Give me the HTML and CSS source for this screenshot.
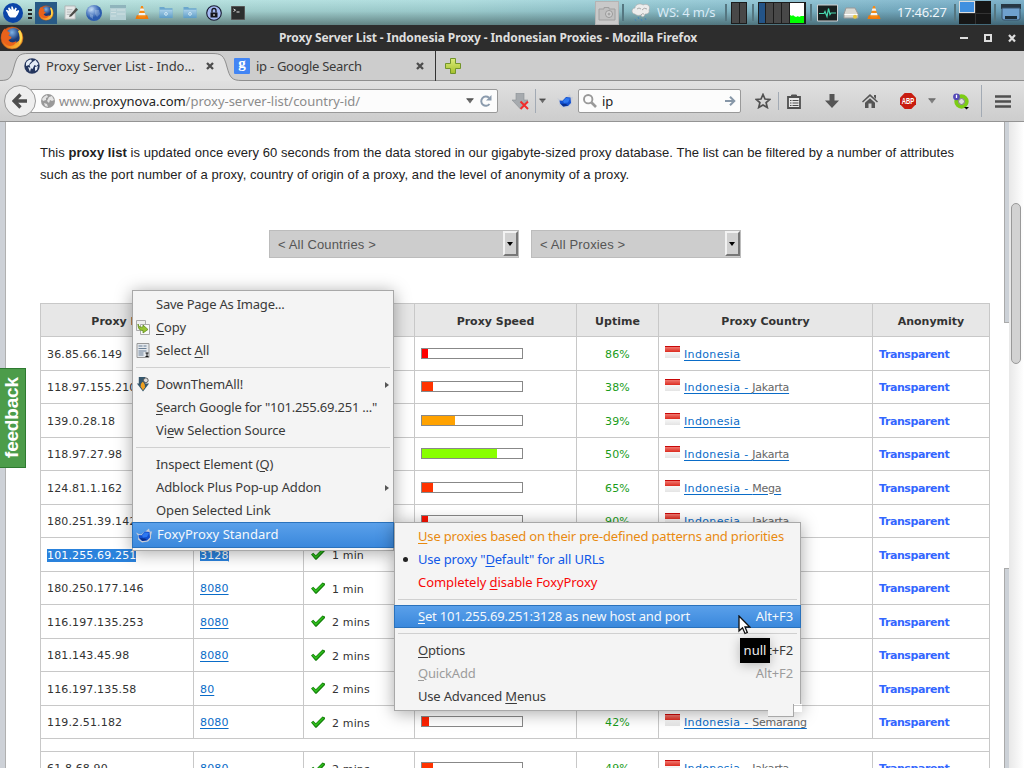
FILE: index.html
```html
<!DOCTYPE html>
<html lang="en">
<head>
    <meta charset="UTF-8">
    <title>Proxy Server List - Indonesia Proxy - Indonesian Proxies</title>
    <link rel="stylesheet" href="styles.css">
</head>
<body>
    <!-- shared icons -->
    <svg class="defs" width="0" height="0">
        <defs>
            <linearGradient id="g-fox" x1="0" y1="0" x2="1" y2="1"><stop offset="0" stop-color="#d8461c"/><stop offset=".55" stop-color="#f08020"/><stop offset="1" stop-color="#ffd840"/></linearGradient>
            <radialGradient id="g-globe" cx=".4" cy=".3"><stop offset="0" stop-color="#7fb4e8"/><stop offset="1" stop-color="#1a3a78"/></radialGradient>
            <radialGradient id="g-world" cx=".35" cy=".3"><stop offset="0" stop-color="#b8d4f4"/><stop offset="1" stop-color="#2c5cae"/></radialGradient>
            <linearGradient id="g-plus" x1="0" y1="0" x2="0" y2="1"><stop offset="0" stop-color="#dcec7a"/><stop offset="1" stop-color="#a4c02c"/></linearGradient>
            <linearGradient id="g-folder" x1="0" y1="0" x2="0" y2="1"><stop offset="0" stop-color="#a9d0ea"/><stop offset="1" stop-color="#5d9cc6"/></linearGradient>
        </defs>
        <symbol id="firefox" viewBox="0 0 24 24">
            <circle cx="12" cy="12" r="11" fill="url(#g-fox)" stroke="#b5541a" stroke-width=".6"/>
            <circle cx="13.5" cy="9.5" r="7.6" fill="url(#g-globe)"/>
            <path d="M20 4c3 4 3 11-1 14 1-4 1-9-1-13z" fill="#ffd84a"/>
            <path d="M1.500 9C2 6 3 4 5 2.500L6 5c2 0 3 1 4 2L8.500 9.500l3 1.500c0 2-2 2-3 3 1 3 5 3 8 1-1 5-8 7-12 2C2 15 1 12 1.500 9z" fill="#e8621c"/>
        </symbol>
        <symbol id="vlc" viewBox="0 0 16 16">
            <path d="M2 11h12l1.500 4.500H.5z" fill="#ee7a0a"/>
            <path d="M7 .5h2L12.500 13q-4.500 2-9 0z" fill="#f58a14"/>
            <path d="M6.200 3.500h3.600l.8 2.500H5.400zM4.700 8.500h6.600l.8 2.700H3.900z" fill="#f4f4f4"/>
        </symbol>
        <symbol id="folder" viewBox="0 0 16 14">
            <path d="M1 3V1h5l1 1.500h8V13H1z" fill="#6ba7cd"/><path d="M1 4h14v9H1z" fill="url(#g-folder)"/>
            <circle cx="8" cy="8.500" r="1.500" fill="none" stroke="#dff0fa" stroke-width=".9"/>
        </symbol>
        <symbol id="fox" viewBox="0 0 16 14">
            <path d="M0 4l3 1.500L5 6l5-3.500L13 0l.8 3L16 3 15 7v3l-3 3-6 1-4-3 .5-3z" fill="#c8ccd6"/>
            <path d="M2.500 6.500l3 .3L9 3l4.500.5L14 9l-3 3-5 .5-3-3z" fill="#1250d0"/>
            <path d="M6 7l3-3 4 .5-2 4-4 .5z" fill="#2e78f0"/>
            <path d="M3.500 9.500l3 3 4.500-1-2-1.500z" fill="#0a2f8c"/>
        </symbol>
        <symbol id="check" viewBox="0 0 14 12">
            <path d="M0 6.500l2.200-1.700 2.600 2.500L11.500.5 14 1.600v1.500L5.500 11.800H4.400z" fill="#16800c"/>
            <path d="M1 6.500l1.200-.8 2.600 2.600 6.900-6.800 1.300.8-8.100 8.200z" fill="#2fbe1c"/>
        </symbol>
        <symbol id="close" viewBox="0 0 8 8"><path d="M1 1l6 6M7 1L1 7" stroke="#4c4c4c" stroke-width="2.300"/></symbol>
        <symbol id="down" viewBox="0 0 8 6"><path d="M.3.500h7.400L4 5.600z" fill="#6a6a6a"/><path d="M.3.500h7.400L7 1.500H1z" fill="#444"/></symbol>
    </svg>

    <div class="taskbar">
        <svg class="tb-start" viewBox="0 0 20 20"><circle cx="10" cy="10" r="10" fill="#0a45a8"/><path d="M4.500 10L2.800 7.500l1-.8L6 8 5 5l1.300-.6L8.500 7l-.3-3.500h1.400L11 7l1.600-2.500 1.200.7-1 3 2.700-1.200.7 1c-1 3-2 4.500-3.700 6.500H7.500C6 13.500 5 12 4.500 10z" fill="#fff"/></svg>
        <div class="grip"><i></i><i></i><i></i></div>
        <div class="task-active"><svg width="16" height="16"><use href="#firefox"/></svg></div>
        <svg class="tb-note" viewBox="0 0 16 16"><path d="M1 1h11v14H1z" fill="#e6e8e8" stroke="#aeb4b4"/><path d="M3 5h6M3 7.500h5M3 10h4" stroke="#b2b6b8"/><path d="M6 11l7-8 2 2-7 7-2.500.8z" fill="#4c4c48"/></svg>
        <svg class="tb-world" viewBox="0 0 16 16"><circle cx="8" cy="8" r="8" fill="url(#g-world)"/><path d="M3 3q3-2 5 0l-1 2-3 2-2-1zM9 5l4 0 1 4-3 3-2-3zM4 9l3 1 0 4-3-2z" fill="#cfe4f6" opacity=".3"/></svg>
        <svg class="tb-window" viewBox="0 0 16 15"><path d="M0 0h16v15H0z" fill="#b5d0d5"/><path d="M0 0h16v3H0z" fill="#8fb4bc"/><path d="M1 5h5M7 5h8M1 7.500h5M7 9h8M1 11h5" stroke="#cfe0e2"/></svg>
        <svg class="tb-vlc"><use href="#vlc"/></svg>
        <svg class="tb-folder"><use href="#folder"/></svg>
        <svg class="tb-folder"><use href="#folder"/></svg>
        <svg class="tb-lock" viewBox="0 0 16 16"><circle cx="8" cy="8" r="7.300" fill="#a4b8f2" stroke="#161a30" stroke-width="1.100"/><path d="M4.500 7.500h7v5h-7z" fill="#15151c"/><path d="M6 7.500V5.500q0-2 2-2t2 2v2" fill="none" stroke="#15151c" stroke-width="1.300"/><path d="M8 9v2" stroke="#fff"/></svg>
        <svg class="tb-term" viewBox="0 0 14 14"><path d="M.5.500h13v13H.5z" fill="#2c2e2e" stroke="#555"/><path d="M2.500 3l2 1.200-2 1.300M5.500 6h3" fill="none" stroke="#e8e8e8"/></svg>

        <div class="tray">
            <div class="camera"><svg width="18" height="14" viewBox="0 0 18 14"><path d="M1 2h5V.5h5V2h6v11H1z" fill="#c0c0c0" stroke="#a0a0a0"/><circle cx="11" cy="7" r="3.500" fill="#d0d0d0" stroke="#999"/><circle cx="11" cy="7" r="1.500" fill="#a5a5a5"/></svg></div>
            <i class="tsep"></i>
            <svg class="cloud" viewBox="0 0 20 20"><path d="M4 11C0 11 0 5 4 5 4 1 10 0 12 2c4-2 8 1 6 5 1 4-3 4-4 4-1 4-4 3-4 1-3 1-5 0-6-1z" fill="#ececec" stroke="#aaa" stroke-width=".6"/><path d="M6 6q2-2 4 0M11 7q2-3 5-1M10 12q1-2 3-1" stroke="#aaa" fill="none"/><path d="M4 16l1 2M7 14l1 2M10 16l1 2M14 15l1 2" stroke="#4884b8"/></svg>
            <span class="weather">WS: 4 m/s</span>
            <i class="tsep"></i>
            <div class="meter two"><i></i><i></i></div>
            <i class="tsep"></i>
            <div class="meter cpu"><i class="busy"></i><i></i><i></i><i></i><svg width="14" height="20" viewBox="0 0 14 20"><path d="M0 0h14v20H0z" fill="#fff"/><path d="M0 20v-8l2 1 1-1 1 1 2 1 2-1 1 1 2-1 3 0v7z" fill="#0f0"/></svg></div>
            <i class="tsep"></i>
            <svg class="pulse" viewBox="0 0 21 17"><path d="M.5.500h20v16H.5z" fill="#182020" stroke="#d0d0d0"/><path d="M2 9h5l1-2 2 5 1.500-8 1.500 6 1-1.500h5" fill="none" stroke="#48d8b0" stroke-width="1.200"/></svg>
            <svg class="disk" viewBox="0 0 16 12"><path d="M3 1h9l3 6v4H1V7z" fill="#d9d9d2" stroke="#999"/><path d="M1.500 7.500h13" stroke="#fff"/><circle cx="12" cy="9.700" r="2" fill="#e8c83c"/></svg>
            <svg class="tray-vlc"><use href="#vlc"/></svg>
            <span class="clock">17:46:27</span>
            <i class="tsep"></i>
            <div class="pager"><i class="on"></i><i></i><i></i><i></i></div>
            <i class="tsep"></i>
            <svg class="desk" viewBox="0 0 20 17"><path d="M0 0h20v5H0z" fill="#273744"/><path d="M1 4h18v10q0 2-2 2H3q-2 0-2-2z" fill="#6fa0ce" stroke="#39536a"/><path d="M4 12h12v3H4z" fill="#1d2b36"/></svg>
        </div>
    </div>

    <div class="titlebar">
        <svg class="logo"><use href="#firefox"/></svg>
        <span class="title">Proxy Server List - Indonesia Proxy - Indonesian Proxies - Mozilla Firefox</span>
        <svg class="winbtns" width="56" height="10" viewBox="0 0 56 10"><path d="M0 5h8" stroke="#dedede" stroke-width="2"/><path d="M25 2h6v6h-6z" fill="none" stroke="#dedede" stroke-width="2"/><path d="M49 2l6 6.500M55 2l-6 6.500" stroke="#dedede" stroke-width="2.200"/></svg>
    </div>

    <div class="tabs">
        <svg class="tab-shape" width="435" height="30" viewBox="0 0 435 30">
            <path d="M0 29.500C10 29.500 11 27 14 16 17 4 20 2.500 28 2.500H212C221 2.500 224 4 227 16 230 27 232 29.500 242 29.500V30H0z" fill="#e2e2e2"/>
            <path d="M0 29.500C10 29.500 11 27 14 16 17 4 20 2.500 28 2.500H212C221 2.500 224 4 227 16 230 27 232 29.500 242 29.500H435" fill="none" stroke="#8e8e8e"/>
        </svg>
        <div class="tab first">
            <svg class="fav" viewBox="0 0 16 16"><circle cx="8" cy="8" r="7.700" fill="#24365e"/><path d="M2 5q1-3 5-3.500L8 3 6 5 5 7 2 8zM8.500 4l3-2 3 4-2 2-2-1-2 4-2-1-1-3zM4 9l3 1-1 4zM11 9l3-1-1 4-2 1z" fill="#e4ecf6"/></svg>
            <span class="label">Proxy Server List - Indo...</span>
            <svg class="x"><use href="#close"/></svg>
        </div>
        <div class="tab second">
            <span class="google">g</span>
            <span class="label tight">ip - Google Search</span>
            <svg class="x"><use href="#close"/></svg>
        </div>
        <svg class="newtab" viewBox="0 0 16 16"><path d="M5.500.500h5v5h5v5h-5v5h-5v-5h-5v-5h5z" fill="url(#g-plus)" stroke="#72942a"/></svg>
    </div>

    <div class="navbar">
        <div class="back"><svg width="16" height="16" viewBox="0 0 16 16"><path d="M15 8H3M8.500 1.500L2 8l6.500 6.500" fill="none" stroke="#4e4e4e" stroke-width="3.300"/></svg></div>
        <div class="urlbar">
            <svg class="site" viewBox="0 0 14 14"><circle cx="7" cy="7" r="7" fill="#999"/><path d="M1 5q2-3 5-4l1 2-2 1 0 2-3 1zM8 3l3-1 2 4-2 1-2-1-1 3-2-2zM3 9l3 1 1 3-3-1z" fill="#e4e4e4"/></svg>
            <span class="url">www.<b>proxynova.com</b>/proxy-server-list/country-id/</span>
            <svg class="drop"><use href="#down"/></svg>
            <svg class="reload" viewBox="0 0 12 12"><path d="M9.500 9A4.600 4.600 0 1 1 9 2.800" fill="none" stroke="#8b9bad" stroke-width="2"/><path d="M11.500 0v5.500H6z" fill="#8b9bad"/></svg>
        </div>
        <svg class="dta" viewBox="0 0 17 17"><path d="M4 0h8v7h4L8 15.500 0 7h4z" fill="#a6aaae" stroke="#8c9094" stroke-width=".6"/><path d="M8.500 8.500l7.500 7.500M16 8.500L8.500 16" stroke="#f22c2c" stroke-width="2"/></svg>
        <i class="nsep s1"></i>
        <svg class="drop d2"><use href="#down"/></svg>
        <svg class="foxy"><use href="#fox"/></svg>
        <div class="search">
            <svg class="mag" viewBox="0 0 14 14"><circle cx="5.200" cy="5.200" r="4.200" fill="none" stroke="#999" stroke-width="1.900"/><path d="M8.500 8.500l4.500 4.500" stroke="#999" stroke-width="2.600"/></svg>
            <span class="q">ip</span>
            <svg class="go" viewBox="0 0 11 10"><path d="M0 5h9M5 .7L9.300 5 5 9.300" fill="none" stroke="#8797a8" stroke-width="2"/></svg>
        </div>
        <div class="tools">
            <svg class="t-star" viewBox="0 0 16 16"><path d="M8 1.500l2 4.500 4.800.4-3.700 3.200 1.200 4.900L8 12l-4.300 2.500 1.200-4.900L1.200 6.400 6 6z" fill="none" stroke="#505050" stroke-width="1.700"/></svg>
            <i class="nsep s2"></i>
            <svg class="t-list" viewBox="0 0 14 15"><path d="M1 3h12v11H1z" fill="#e8e8e8" stroke="#505050" stroke-width="1.800"/><path d="M4.500 3V1h5v2z" fill="#505050" stroke="#505050"/><path d="M3 6.500h1.500M5.500 6.500h6M3 9h1.500M5.500 9h6M3 11.500h1.500M5.500 11.500h6" stroke="#505050" stroke-width="1.100"/></svg>
            <svg class="t-dl" viewBox="0 0 14 14"><path d="M4.500 0h5v6.500H14L7 14 0 6.500h4.500z" fill="#555"/></svg>
            <svg class="t-home" viewBox="0 0 16 14"><path d="M0 7.500L8 0l8 7.500-1 1L8 2.200l-7 6.300z" fill="#555"/><path d="M12 1h2v4l-2-2zM3 8.700l5-4.500 5 4.500V14H9.500V9.500h-3V14H3z" fill="#555"/></svg>
            <svg class="t-abp" viewBox="0 0 16 16"><path d="M4.700 0h6.600L16 4.700v6.600L11.300 16H4.700L0 11.300V4.700z" fill="#c81c10"/><text x="8" y="11" text-anchor="middle" class="abp-text" textLength="12.500" lengthAdjust="spacingAndGlyphs">ABP</text></svg>
            <svg class="drop d3"><use href="#down"/></svg>
            <svg class="t-ring" viewBox="0 0 16 17"><circle cx="8.500" cy="8.500" r="5.200" fill="none" stroke="#7ccc14" stroke-width="4"/><circle cx="8.500" cy="8.500" r="3" fill="#ddd" stroke="#777"/><circle cx="3.500" cy="3.800" r="3.400" fill="#5448b8"/><path d="M3.500 1.800v3.200" stroke="#fff" stroke-width="1.300"/><path d="M11 14h5l-2.500 2.500z" fill="#000"/></svg>
            <i class="nsep s3"></i>
            <svg class="t-menu" viewBox="0 0 16 13"><path d="M0 1.500h16M0 6.500h16M0 11.500h16" stroke="#505050" stroke-width="2.600"/></svg>
        </div>
    </div>

    <div class="viewport">
        <div class="edge"></div>
        <div class="page">
            <p class="intro">This <b>proxy list</b> is updated once every 60 seconds from the data stored in our gigabyte-sized proxy database. The list can be filtered by a number of attributes<br><span class="wider">such as the port number of a proxy, country of origin of a proxy, and the level of anonymity of a proxy.</span></p>
            <div class="filters">
                <div class="select wide"><span>&lt; All Countries &gt;</span><i></i></div>
                <div class="select"><span>&lt; All Proxies &gt;</span><i></i></div>
            </div>
            <table class="proxies">
                <colgroup><col class="c-ip"><col class="c-port"><col class="c-check"><col class="c-speed"><col class="c-up"><col class="c-country"><col class="c-anon"></colgroup>
                <thead>
                    <tr><th>Proxy IP</th><th>Proxy Port</th><th>Last Check</th><th>Proxy Speed</th><th>Uptime</th><th>Proxy Country</th><th>Anonymity</th></tr>
                </thead>
                <tbody id="rows"></tbody>
            </table>
        </div>
        <div class="gutter"><div class="gutter-gap"></div></div>
        <div class="scrollbar"><div class="thumb"></div></div>
        <div class="feedback">feedback</div>
    </div>

    <div class="menu main-menu">
        <div class="item"><span class="tight">Save Page As Image...</span></div>
        <div class="item"><svg class="mi" viewBox="0 0 14 15"><path d="M.5.500h9v10h-9z" fill="#eee" stroke="#aaa"/><path d="M4.500 4.500h9v10h-9z" fill="#fafafa" stroke="#aaa"/><path d="M2 4q1 4 5 3V5l5 4.500L7 13v-2.500Q2 11 2 4z" fill="#98c434" stroke="#5e8a1c" stroke-width=".8"/></svg><span><u>C</u>opy</span></div>
        <div class="item"><svg class="mi" viewBox="0 0 13 15"><path d="M.5.500h12v14H.5z" fill="#e4e8ec" stroke="#999"/><path d="M2 3h4M7 3h3M2 5.500h8M2 8h8M2 10h5M2 12h5" stroke="#6a7f96"/><path d="M9 10h3M9 13.500h3M10.500 10v3.500" stroke="#111"/></svg><span>Select <u>A</u>ll</span></div>
        <hr>
        <div class="item sub"><svg class="mi" viewBox="0 0 13 16"><path d="M2 0h7v7h4L6.500 15.500 0 7h2z" fill="#35566c"/><path d="M6 5q3 2 2.500 6l-2 3L4 10.500Q3.500 7 6 5z" fill="#f0a020"/><circle cx="9.500" cy="3.500" r="2.500" fill="#ddd" stroke="#555"/></svg><span>DownThemAll!</span></div>
        <div class="item"><span class="tight"><u>S</u>earch Google for "101.255.69.251 ..."</span></div>
        <div class="item"><span>Vi<u>e</u>w Selection Source</span></div>
        <hr>
        <div class="item"><span>Inspect Element (<u>Q</u>)</span></div>
        <div class="item sub"><span>Adblock Plus Pop-up Addon</span></div>
        <div class="item"><span>Open Selected Link</span></div>
        <div class="item active"><svg class="mi"><use href="#fox"/></svg><span>FoxyProxy Standard</span></div>
    </div>

    <div class="menu sub-menu">
        <div class="item orange"><span><u>U</u>se proxies based on their pre-defined patterns and priorities</span></div>
        <div class="item blue radio"><span>Use proxy "<u>D</u>efault" for all URLs</span></div>
        <div class="item red"><span>Completely <u>d</u>isable FoxyProxy</span></div>
        <hr>
        <div class="item active"><span><u>S</u>et 101.255.69.251:3128 as new host and port</span><kbd>Alt+F3</kbd></div>
        <hr>
        <div class="item"><span><u>O</u>ptions</span><kbd>Alt+F2</kbd></div>
        <div class="item off"><span><u>Q</u>uickAdd</span><kbd>Alt+F2</kbd></div>
        <div class="item"><span>Use Advanced <u>M</u>enus</span></div>
    </div>
    <div class="corner-gap"></div>
    <div class="corner"></div>

    <div class="tooltip">null</div>
    <svg class="cursor" viewBox="0 0 13 20"><path d="M1 1v15l3.500-3.200L7 18.500l2.300-1L7 12h4.800z" fill="#fff" stroke="#111" stroke-width="1.300"/></svg>

    <script>
        // ip, port, last check, speed %, bar colour, uptime, city
        const proxies = [
            ['36.85.66.149', '8080', '1 min', 6, 'red', '86%', ''],
            ['118.97.155.210', '8080', '1 min', 11, '#f30', '38%', 'Jakarta'],
            ['139.0.28.18', '8080', '1 min', 33, '#ffa200', '39%', ''],
            ['118.97.27.98', '8080', '1 min', 75, '#8f0', '50%', 'Jakarta'],
            ['124.81.1.162', '8080', '1 min', 11, '#f30', '65%', 'Mega'],
            ['180.251.39.142', '8080', '1 min', 6, '#f10', '90%', 'Jakarta'],
            ['101.255.69.251', '3128', '1 min', 8, '#f20', '', ''],
            ['180.250.177.146', '8080', '1 min', 8, '#f20', '', ''],
            ['116.197.135.253', '8080', '2 mins', 8, '#f20', '', ''],
            ['181.143.45.98', '8080', '2 mins', 8, '#f20', '', ''],
            ['116.197.135.58', '80', '2 mins', 8, '#f20', '', ''],
            ['119.2.51.182', '8080', '2 mins', 7, '#f20', '42%', 'Semarang'],
            null,
            ['61.8.68.90', '8080', '2 mins', 11, '#f30', '49%', 'Jakarta']
        ];

        document.getElementById('rows').innerHTML = proxies.map(p => {
            if (!p) return '<tr class="spacer"><td colspan="7"></td></tr>';
            const [ip, port, ago, speed, color, up, city] = p;
            const sel = port === '3128' ? ' class="selected"' : '';
            const country = up ? `<i class="flag"></i><a>Indonesia${city ? ` - <small>${city}</small>` : ''}</a>` : '';
            return `<tr>
                <td><span${sel}>${ip}</span></td>
                <td><a${sel}>${port}</a></td>
                <td class="ago"><svg class="ok"><use href="#check"/></svg>${ago}</td>
                <td><div class="bar"><div style="width:${speed}%;background:${color}"></div></div></td>
                <td class="up">${up}</td>
                <td class="country">${country}</td>
                <td class="anon">Transparent</td>
            </tr>`;
        }).join('');
    </script>
</body>
</html>
```

FILE: styles.css
```css
* {
    box-sizing: border-box;
}
body {
    margin: 0;
    width: 1024px;
    height: 768px;
    overflow: hidden;
    position: relative;
    display: flex;
    flex-direction: column;
    background: #fff;
    font-family: "Noto Sans", "Open Sans", sans-serif;
    font-size: 13px;
    color: #3a3a3a;
}
svg {
    display: block;
    flex: none;
}
.defs {
    position: absolute;
}

/* desktop panel */
.taskbar {
    height: 25px;
    flex: none;
    display: flex;
    align-items: center;
    padding-left: 3px;
    background: linear-gradient(rgba(255,255,255,.12), rgba(0,0,0,.08) 45%, rgba(0,10,10,.42)), linear-gradient(90deg, #b5e2dd, #a5d8da 45%, #86bfd0 75%, #6ea8c4);
}
.tb-start { width: 20px; height: 20px; }
.grip {
    display: flex;
    flex-direction: column;
    gap: 2px;
    margin: 2px 3px 0 5px;
}
.grip i {
    width: 4px;
    height: 2px;
    background: #222;
}
.task-active {
    width: 22px;
    height: 22px;
    padding: 3px;
    background: #285a86;
}
.tb-note { width: 15px; height: 15px; margin-left: 7px; }
.tb-world { width: 16px; height: 16px; margin-left: 7px; }
.tb-window { width: 16px; height: 15px; margin-left: 8px; }
.tb-vlc { width: 14px; height: 15px; margin-left: 9px; }
.tb-folder { width: 16px; height: 13px; margin-left: 8px; }
.tb-vlc + .tb-folder { margin-left: 9px; }
.tb-lock { width: 16px; height: 16px; margin-left: 8px; }
.tb-term { width: 14px; height: 14px; margin-left: 9px; }
.tray {
    margin-left: auto;
    width: 429px;
    height: 25px;
    display: flex;
    align-items: center;
}
.camera {
    width: 24px;
    height: 24px;
    background: #c9c9c9;
    border: 1px solid #b4b4b4;
    padding: 5px 2px;
}
.tsep {
    width: 2px;
    height: 17px;
    margin: 0 3px;
    background: #557680;
}
.cloud { width: 20px; height: 20px; margin-left: 4px; }
.weather {
    width: 61px;
    margin: 0 4px 0 6px;
    font-size: 13px;
    letter-spacing: -.2px;
    line-height: 22px;
    height: 24px;
    white-space: nowrap;
    color: #d8eaf6;
}
.clock {
    width: 52px;
    margin: 0 2px 0 16px;
    font-size: 13px;
    letter-spacing: -.25px;
    line-height: 22px;
    height: 24px;
    white-space: nowrap;
    color: #eef5fa;
}
.meter {
    height: 22px;
    flex: none;
    display: flex;
    gap: 1px;
    padding: 1px;
    background: #1c1c1c;
}
.meter i {
    width: 7px;
    background: #484848;
}
.meter.two { width: 16px; margin: 0 2px 0 1px; }
.meter.cpu { width: 48px; margin: 0 1px; }
.meter .busy {
    background: #235488;
    width: 6px;
}
.pulse { width: 21px; height: 18px; margin-left: 2px; }
.disk { width: 16px; height: 12px; margin-left: 5px; }
.tray-vlc { width: 14px; height: 15px; margin-left: 8px; }
.pager {
    width: 32px;
    height: 23px;
    flex: none;
    display: grid;
    grid-template-columns: 1fr 1fr;
    gap: 1px;
    background: #333;
}
.pager i { background: #161616; }
.pager .on {
    background: #4090e0;
    border: 1px solid #ddd;
}
.desk { width: 20px; height: 17px; margin-left: 2px; }

/* window title */
.titlebar {
    height: 26px;
    flex: none;
    display: flex;
    align-items: center;
    background: #2d2d2d;
    color: #dedede;
}
.logo { width: 24px; height: 24px; }
.title {
    width: 680px;
    margin: 0 0 0 255px;
    font-size: 12px;
    font-weight: bold;
    letter-spacing: -.12px;
    line-height: 24px;
    white-space: nowrap;
}
.winbtns { margin-left: 1px; }

/* tabs */
.tabs {
    height: 30px;
    flex: none;
    position: relative;
    display: flex;
    align-items: center;
    background: #cdcdcd;
    border-bottom: 1px solid #8e8e8e;
}
.tab-shape {
    position: absolute;
    left: 0;
    top: 0;
}
.tab {
    position: relative;
    display: flex;
    align-items: center;
    height: 30px;
}
.tab.first {
    width: 234px;
    padding-left: 24px;
}
.tab.second {
    width: 202px;
    border-right: 1px solid #333;
}
.fav { width: 16px; height: 16px; }
.google {
    width: 16px;
    height: 16px;
    border-radius: 1px;
    background: #4285f4;
    color: #fff;
    font: bold 15px/11px "Liberation Serif", serif;
    text-align: center;
}
.label {
    width: 160px;
    margin-left: 6px;
    letter-spacing: -.08px;
    white-space: nowrap;
}
.label.tight { letter-spacing: -.28px; }
.tab .x { width: 8px; height: 8px; }
.newtab { width: 16px; height: 16px; margin-left: 9px; }

/* navigation */
.navbar {
    height: 41px;
    flex: none;
    display: flex;
    align-items: center;
    background: linear-gradient(#e0e0e0, #cdcdcd);
    border-bottom: 1px solid #949494;
}
.back {
    width: 32px;
    height: 32px;
    flex: none;
    margin-left: 4px;
    padding: 7px;
    border: 1px solid #999;
    border-radius: 50%;
    background: #eee;
    z-index: 1;
}
.urlbar, .search {
    height: 24px;
    flex: none;
    display: flex;
    align-items: center;
    background: #fcfcfc;
    border: 1px solid #999;
    border-radius: 2px;
}
.urlbar {
    width: 470px;
    margin-left: -8px;
    padding-left: 12px;
    color: #8b8b8b;
}
.site { width: 14px; height: 14px; }
.url {
    width: 407px;
    margin-left: 4px;
    letter-spacing: -.03px;
    white-space: nowrap;
}
.url b {
    color: #222;
    font-weight: normal;
}
.drop { width: 8px; height: 6px; }
.reload { width: 12px; height: 12px; margin-left: 6px; }
.dta { width: 17px; height: 17px; margin-left: 14px; }
.nsep {
    width: 1px;
    background: #a2aab4;
}
.nsep.s1 { height: 24px; margin: 0 3px 0 6px; }
.d2 { width: 7px; }
.foxy { width: 16px; height: 14px; margin: 0 5px 0 11px; }
.search {
    width: 163px;
    padding: 0 4px 0 4px;
}
.mag { width: 14px; height: 14px; }
.q {
    flex: 1;
    margin-left: 5px;
    color: #222;
}
.go { width: 11px; height: 10px; }
.tools {
    flex: 1;
    display: flex;
    align-items: center;
}
.t-star { width: 16px; height: 16px; margin-left: 14px; }
.nsep.s2 { height: 18px; margin: 0 8px 0 7px; }
.t-list { width: 14px; height: 15px; }
.t-dl { width: 14px; height: 14px; margin-left: 24px; }
.t-home { width: 16px; height: 14px; margin-left: 23px; }
.t-abp { width: 16px; height: 16px; margin-left: 22px; }
.abp-text {
    font: bold 9px "Liberation Sans", sans-serif;
    fill: #fff;
}
.d3 { margin-left: 12px; opacity: .8; }
.t-ring { width: 16px; height: 17px; margin-left: 17px; }
.nsep.s3 { height: 32px; margin: 0 13px 0 12px; }
.t-menu { width: 16px; height: 13px; }

/* page */
.viewport {
    flex: 1;
    min-height: 0;
    display: flex;
    position: relative;
}
.edge {
    width: 6px;
    flex: none;
    background: #cdd1d7;
    border-right: 1px solid #b0b0b0;
}
.page {
    width: 998px;
    flex: none;
    overflow: hidden;
    padding: 20px 14px 0 34px;
    background: #fff;
}
.intro {
    margin: 0;
    font: 13px/22px "Liberation Sans", Arial, sans-serif;
    letter-spacing: .06px;
    color: #222;
    white-space: nowrap;
}
.wider { letter-spacing: .08px; }
.filters {
    display: flex;
    gap: 12px;
    margin: 44px 0 0 229px;
}
.select {
    width: 210px;
    height: 28px;
    display: flex;
    border: 1px solid #bcbcbc;
    background: #cdcdcd;
    font: 13px/27px "Liberation Sans", Arial, sans-serif;
    color: #555;
}
.select.wide { width: 250px; }
.select span {
    flex: 1;
    padding-left: 8px;
    letter-spacing: .15px;
}
.select i {
    width: 15px;
    margin: 0 0 1px;
    border: 2px solid;
    border-color: #f2f2f2 #777 #777 #f2f2f2;
    background: #d0d0d0;
    position: relative;
}
.select i::after {
    content: "";
    position: absolute;
    left: 2px;
    top: 9px;
    border: 3.500px solid transparent;
    border-top: 4px solid #000;
    border-bottom: 0;
}
.proxies {
    width: 950px;
    margin-top: 45px;
    table-layout: fixed;
    border-collapse: collapse;
    font: 11px/14px "DejaVu Sans", sans-serif;
    letter-spacing: .14px;
    color: #333;
}
.c-ip { width: 153px; }
.c-port { width: 110px; }
.c-check { width: 111px; }
.c-speed { width: 162px; }
.c-up { width: 82px; }
.c-country { width: 214px; }
.c-anon { width: 117px; }
.proxies th, .proxies td {
    border: 1px solid #c8c8c8;
    padding: 2px 6px 0;
    text-align: left;
    white-space: nowrap;
}
.proxies th {
    height: 33px;
    padding-top: 3px;
    background: #e7e7e7;
    letter-spacing: 0;
    text-align: center;
}
.proxies tbody td { height: 34px; }
.proxies tbody tr:nth-child(even) td { height: 33px; }
.proxies tbody .spacer:nth-child(n) td { height: 13px; padding: 0; }
.proxies a {
    color: #0a6cc8;
    text-decoration: underline;
    text-underline-offset: 2px;
}
.proxies .country {
    padding-top: 0;
    letter-spacing: .35px;
}
.proxies small {
    font-size: 11px;
    letter-spacing: -.25px;
    color: #666;
}
.proxies .selected {
    background: #2a82dc;
    color: #fff;
}
.ok {
    display: inline-block;
    width: 14px;
    height: 12px;
    margin: 0 7px 0 1px;
    vertical-align: -1px;
}
.bar {
    width: 102px;
    height: 11px;
    border: 1px solid #888;
    margin-top: -3px;
}
.bar div { height: 9px; }
.proxies .up {
    text-align: center;
    color: #1a9c1a;
}
.proxies .anon {
    color: #3366ff;
    font-weight: bold;
    letter-spacing: -.4px;
}
.flag {
    display: inline-block;
    width: 15px;
    height: 12px;
    margin-right: 4px;
    background: linear-gradient(#c80808 1px, #f07870 1px, #dc2c20 6px, #f8f8f8 6px, #e4e4e4);
}
.gutter {
    width: 5px;
    background: #ccd1d7;
    border-left: 1px solid #aaa;
}
.gutter-gap {
    height: 247px;
    margin: 200px 0 0 -1px;
    background: #fff;
    border: solid #aaa;
    border-width: 1px 0;
}
.scrollbar {
    width: 15px;
    padding: 81px 2px 0;
    background: linear-gradient(90deg, #e8e8e8, #fff);
}
.thumb {
    width: 10px;
    height: 161px;
    border: 1px solid #999;
    border-radius: 5px;
    background: #d2d2d2;
}
.feedback {
    position: absolute;
    left: 0;
    top: 246px;
    width: 26px;
    height: 100px;
    border: 1px solid #2e7a30;
    border-right: 0;
    background: #4c9c4a;
    color: #fff;
    font: bold 19px/24px "Liberation Sans", Arial, sans-serif;
    letter-spacing: -.2px;
    writing-mode: vertical-rl;
    transform: rotate(180deg);
    text-align: center;
}

/* context menus */
.menu {
    position: absolute;
    background: #f4f4f4;
    border: 1px solid #a8a8a8;
    padding: 2px 0;
    letter-spacing: -.13px;
    box-shadow: 0 2px 16px rgba(0,0,0,.35);
}
.main-menu {
    left: 132px;
    top: 290px;
    width: 262px;
}
.sub-menu {
    left: 394px;
    top: 522px;
    width: 407px;
}
.item {
    height: 23px;
    display: flex;
    align-items: center;
    position: relative;
    padding: 0 7px 0 23px;
    white-space: nowrap;
}
.item span, .item kbd {
    padding-bottom: 2px;
}
.item u {
    text-underline-offset: 2px;
}
.item .tight { letter-spacing: -.22px; }
.sub-menu span { letter-spacing: -.18px; }
.sub-menu .red span { letter-spacing: -.07px; }
.menu hr {
    height: 1px;
    margin: 5px 3px;
    border: 0;
    background: #d0d0d0;
}
.mi {
    width: 14px;
    height: 15px;
    margin: 0 6px 0 -20px;
}
.item.active {
    margin: 0 -1px;
    padding: 0 7px 0 23px;
    border: 1px solid #2a72bc;
    background: linear-gradient(#5aa0ea, #3a88dc);
    color: #f4f8fc;
}
.main-menu .item.active {
    height: 26px;
    padding-left: 24px;
    letter-spacing: .03px;
}
.main-menu .active .mi {
    width: 16px;
    margin: 0 5px 0 -21px;
}
.item.sub::after {
    content: "";
    margin-left: auto;
    margin-right: -3px;
    border: 3px solid transparent;
    border-left: 4px solid #555;
    border-right: 0;
}
.item kbd {
    margin-left: auto;
    font: inherit;
}
.orange { color: #e88a10; }
.blue { color: #1058e8; }
.red { color: #f80808; }
.off { color: #9c9c9c; }
.radio::before {
    content: "";
    position: absolute;
    left: 8px;
    top: 9px;
    width: 5px;
    height: 5px;
    border-radius: 50%;
    background: #222;
}
.corner-gap {
    position: absolute;
    left: 794px;
    top: 704px;
    width: 8px;
    height: 8px;
    background: #fff linear-gradient(#c8c8c8, #c8c8c8) 0 1px / 100% 1px no-repeat;
}
.corner {
    position: absolute;
    left: 768px;
    top: 704px;
    width: 26px;
    height: 13px;
    background: #f4f4f4;
    border: solid #a8a8a8;
    border-width: 0 1px 1px 0;
}
.tooltip {
    position: absolute;
    left: 740px;
    top: 638px;
    width: 30px;
    height: 25px;
    background: #000;
    color: #eee;
    line-height: 24px;
    text-align: center;
    box-shadow: 0 2px 12px rgba(0,0,0,.25);
}
.cursor {
    position: absolute;
    left: 738px;
    top: 615px;
    width: 13px;
    height: 20px;
}
```
